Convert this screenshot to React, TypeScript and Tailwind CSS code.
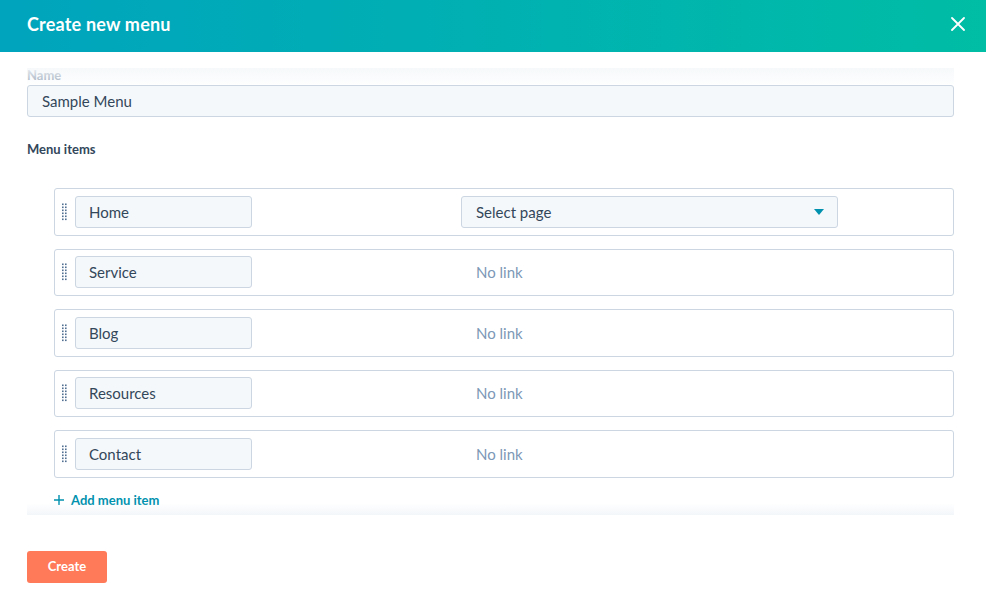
import React from 'react';

const items = ['Home', 'Service', 'Blog', 'Resources', 'Contact'];

const DragHandle = () => (
  <svg width="5" height="18" viewBox="0 0 5 18" className="shrink-0">
    {[0, 1, 2, 3, 4, 5].map((r) => (
      <g key={r} fill="#516f90">
        <rect x="0" y={r * 3 + 0.5} width="1.6" height="1.6" />
        <rect x="3" y={r * 3 + 0.5} width="1.6" height="1.6" />
      </g>
    ))}
  </svg>
);

const App = () => {
  return (
    <div
      className="w-[986px] h-[599px] bg-white overflow-hidden text-[#33475b]"
      style={{ fontFamily: 'Lato, "Liberation Sans", sans-serif' }}
    >
      {/* header */}
      <div className="h-[52px] flex items-center justify-between pl-[27px] pr-[21px] pb-[4px] bg-gradient-to-r from-[#00a4bd] to-[#00bda5]">
        <h1 className="text-white text-[18px] font-bold tracking-[0.2px]">Create new menu</h1>
        <svg width="14" height="14" viewBox="0 0 14 14">
          <path d="M1 1 L13 13 M13 1 L1 13" stroke="white" strokeWidth="1.8" strokeLinecap="round" />
        </svg>
      </div>

      <div className="px-[27px] pr-[32px]">
        {/* scroll area */}
        <div className="relative mt-[16px] h-[447px] overflow-hidden">
          <label className="block text-[13px] font-bold leading-[15px] text-[#8a9bae]">Name</label>
          <div className="mt-[2px] h-[32px] flex items-center px-[14px] bg-[#f5f8fa] border border-[#cbd6e2] rounded-[3px] text-[15px]">
            Sample Menu
          </div>

          <div className="mt-[22px] text-[13px] font-bold leading-[20px]">Menu items</div>

          <div className="mt-[29px] pl-[27px] flex flex-col gap-[13px]">
            {items.map((name, i) => (
              <div
                key={name}
                className="h-[47.5px] flex items-center border border-[#cbd6e2] rounded-[3px] bg-white pl-[7px]"
              >
                <DragHandle />
                <div className="ml-[8px] w-[177px] h-[32px] flex items-center px-[13px] bg-[#f5f8fa] border border-[#cbd6e2] rounded-[3px] text-[15px]">
                  {name}
                </div>
                {i === 0 ? (
                  <div className="ml-[209px] w-[377px] h-[32px] flex items-center justify-between px-[14px] pr-[13px] bg-[#f5f8fa] border border-[#cbd6e2] rounded-[3px] text-[15px]">
                    <span>Select page</span>
                    <svg width="10" height="6" viewBox="0 0 10 6">
                      <path d="M0 0 H10 L5 6 Z" fill="#0091ae" />
                    </svg>
                  </div>
                ) : (
                  <div className="ml-[209px] pl-[15px] text-[15px] text-[#7c98b6]">No link</div>
                )}
              </div>
            ))}
          </div>

          <button className="mt-[12px] ml-[27px] flex items-center gap-[7px] text-[13px] font-bold leading-[20px] text-[#0091ae]">
            <svg width="10" height="10" viewBox="0 0 10 10">
              <path d="M5 0 V10 M0 5 H10" stroke="#0091ae" strokeWidth="1.4" />
            </svg>
            Add menu item
          </button>

          {/* scroll fades */}
          <div className="absolute top-0 left-0 right-0 h-[16px] bg-gradient-to-b from-[rgba(245,248,250,0.9)] to-[rgba(245,248,250,0.2)]" />
          <div className="absolute bottom-0 left-0 right-0 h-[12px] bg-gradient-to-t from-[rgba(240,244,248,0.8)] to-[rgba(245,248,250,0)]" />
        </div>

        <button className="mt-[36px] w-[80px] h-[32px] rounded-[3px] bg-[#ff7a59] text-white text-[13px] font-bold">
          Create
        </button>
      </div>
    </div>
  );
};

export default App;
